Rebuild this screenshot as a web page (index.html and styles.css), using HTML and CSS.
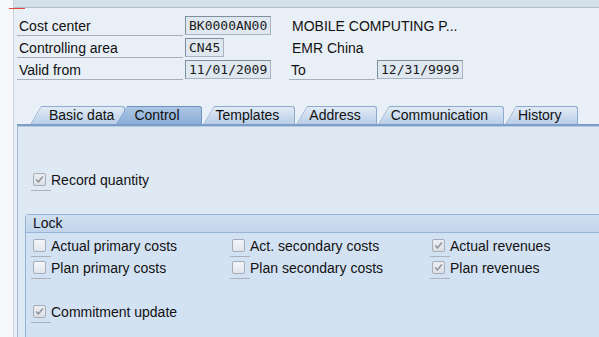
FILE: index.html
```html
<!DOCTYPE html>
<html lang="en">
<head>
	<meta charset="UTF-8" />
	<title>Cost Center - Control</title>
	<link rel="stylesheet" href="styles.css">
</head>
<body>
	<div class="gutter"></div>
	<div class="main">
		<div class="topbar"></div>
		<div class="content">

			<!-- header fields -->
			<div class="header">
				<div class="label">Cost center</div>
				<div class="field"><span class="input">BK0000AN00</span></div>
				<div class="desc wide">MOBILE COMPUTING P...</div>

				<div class="label">Controlling area</div>
				<div class="field"><span class="input">CN45</span></div>
				<div class="desc wide">EMR China</div>

				<div class="label">Valid from</div>
				<div class="field"><span class="input">11/01/2009</span></div>
				<div class="label to">To</div>
				<div class="field"><span class="input">12/31/9999</span></div>
			</div>

			<!-- tab strip -->
			<div class="tabs">
				<div class="tab">Basic data</div>
				<div class="tab on">Control</div>
				<div class="tab">Templates</div>
				<div class="tab">Address</div>
				<div class="tab">Communication</div>
				<div class="tab">History</div>
			</div>

			<div class="panel">
				<div class="check single">
					<span class="cb"><span class="box done"><svg viewBox="0 0 11 11" width="11" height="11"><path d="M2.3 5.4 4.4 7.9 8.9 2.6" fill="none" stroke="#8a929b" stroke-width="1.5"/></svg></span></span>
					<span class="text">Record quantity</span>
				</div>

				<div class="lock">
					<div class="lock-head">Lock</div>
					<div class="lock-body">
						<div class="check">
							<span class="cb"><span class="box"></span></span>
							<span class="text">Actual primary costs</span>
						</div>
						<div class="check">
							<span class="cb"><span class="box"></span></span>
							<span class="text">Act. secondary costs</span>
						</div>
						<div class="check">
							<span class="cb"><span class="box done"><svg viewBox="0 0 11 11" width="11" height="11"><path d="M2.3 5.4 4.4 7.9 8.9 2.6" fill="none" stroke="#8a929b" stroke-width="1.5"/></svg></span></span>
							<span class="text">Actual revenues</span>
						</div>

						<div class="check">
							<span class="cb"><span class="box"></span></span>
							<span class="text">Plan primary costs</span>
						</div>
						<div class="check">
							<span class="cb"><span class="box"></span></span>
							<span class="text">Plan secondary costs</span>
						</div>
						<div class="check">
							<span class="cb"><span class="box done"><svg viewBox="0 0 11 11" width="11" height="11"><path d="M2.3 5.4 4.4 7.9 8.9 2.6" fill="none" stroke="#8a929b" stroke-width="1.5"/></svg></span></span>
							<span class="text">Plan revenues</span>
						</div>

						<div class="spacer"></div>

						<div class="check">
							<span class="cb"><span class="box done"><svg viewBox="0 0 11 11" width="11" height="11"><path d="M2.3 5.4 4.4 7.9 8.9 2.6" fill="none" stroke="#8a929b" stroke-width="1.5"/></svg></span></span>
							<span class="text">Commitment update</span>
						</div>
					</div>
				</div>
			</div>

		</div>
	</div>
</body>
</html>
```

FILE: styles.css
```css
body {
	margin: 0;
	height: 337px;
	overflow: hidden;
	display: flex;
	font-family: "Liberation Sans", Arial, sans-serif;
	font-size: 14px;
	color: #111;
	background: #e9eff6;
}

/* narrow strip on the left */
.gutter {
	position: relative;
	flex: none;
	width: 13px;
	background: #f7f8fa;
	border-right: 1px solid #cbd2db;
	z-index: 1;
}

.gutter::after {
	content: "";
	position: absolute;
	top: 8px;
	left: 9px;
	width: 16px;
	height: 1px;
	background: #e5483e;
}

.main {
	flex: 1;
	min-width: 0;
	background: #e9eff6;
}

.topbar {
	height: 7px;
	background: #d6e0eb;
	border-bottom: 1px solid #b3bfcd;
}

.content {
	padding-left: 3px;
}

/* header fields */
.header {
	display: grid;
	grid-template-columns: 168px 104px 88px auto;
	grid-auto-rows: 22px;
	padding-top: 6px;
}

.label {
	margin-right: 2px;
	box-sizing: border-box;
	height: 22px;
	padding: 3px 0 0 2px;
	line-height: 18px;
	border-bottom: 1px solid #a8b0bb;
	white-space: nowrap;
}

.desc {
	box-sizing: border-box;
	height: 22px;
	padding: 3px 0 0 3px;
	line-height: 18px;
	white-space: nowrap;
}

.wide {
	grid-column: 3 / 5;
}

.field {
	display: flex;
	align-items: center;
}

.input {
	box-sizing: border-box;
	height: 19px;
	padding: 0 3px;
	line-height: 17px;
	font-family: "DejaVu Sans Mono", "Liberation Mono", monospace;
	font-size: 13px;
	color: #1a1a1a;
	background: #dfe8f1;
	border: 1px solid #7f8d9c;
	border-right-color: #a9b4c0;
	border-bottom-color: #a9b4c0;
}

/* tab strip */
.tabs {
	display: flex;
	height: 18px;
	margin-top: 26px;
	padding-left: 13px;
	border-bottom: 2px solid #7d9ec7;
}

.tab {
	position: relative;
	isolation: isolate;
	box-sizing: border-box;
	height: 18px;
	padding: 1px 16px 0 13px;
	margin-left: 1px;
	line-height: 17px;
	white-space: nowrap;
}

.tab:first-child {
	margin-left: 0;
	padding: 1px 11px 0 19px;
}

/* slanted left edge */
.tab::before {
	content: "";
	position: absolute;
	left: 0;
	top: 0;
	bottom: 0;
	width: 18px;
	background: linear-gradient(#e1ebf6, #b9cee7);
	border-left: 1px solid #8eaacc;
	border-top: 1px solid #8eaacc;
	border-top-left-radius: 2px;
	transform-origin: 0 100%;
	transform: skewX(-31deg);
	z-index: -1;
}

.tab::after {
	content: "";
	position: absolute;
	left: 11px;
	right: 0;
	top: 0;
	bottom: 0;
	background: linear-gradient(#e1ebf6, #b9cee7);
	border-top: 1px solid #8eaacc;
	border-right: 1px solid #8eaacc;
	border-top-right-radius: 3px;
	z-index: -1;
}

.tab.on {
	margin-left: -9px;
	padding: 1px 22px 0 18px;
	z-index: 1;
}

.tab.on::before,
.tab.on::after {
	background: linear-gradient(#adc6e4, #8aadd8);
	border-color: #6f93c0;
}

/* tab page */
.panel {
	background: #dfe9f4;
	border-left: 1px solid #a3bad6;
	border-top: 1px solid #b6cae2;
	padding: 42px 0 20px 0;
}

.check {
	display: flex;
	height: 22px;
}

.check.single {
	padding-left: 13px;
}

.cb {
	box-sizing: border-box;
	width: 20px;
	padding-left: 2px;
	display: flex;
	align-items: center;
	border-bottom: 1px solid #a9b1bc;
}

.box {
	width: 11px;
	height: 11px;
	display: flex;
	border: 1px solid #a4adb8;
	border-radius: 2px;
	background: linear-gradient(#f4f6f9, #e1e5eb);
}

.box.done {
	background: linear-gradient(#eceef1, #dcdfe4);
}

.text {
	padding-top: 2px;
	line-height: 19px;
	white-space: nowrap;
}

/* lock group */
.lock {
	margin: 23px -4px 0 7px;
	border: 1px solid #93b2d7;
	border-top-left-radius: 3px;
	background: #d3e2f3;
}

.lock-head {
	height: 17px;
	padding-left: 7px;
	line-height: 17px;
	background: linear-gradient(#d0e0f1, #c1d5ec);
	border-bottom: 1px solid #98b5d8;
}

.lock-body {
	display: grid;
	grid-template-columns: 199px 200px 1fr;
	grid-auto-rows: 22px;
	padding: 2px 0 30px 5px;
}

.spacer {
	grid-column: 1 / -1;
}
```
